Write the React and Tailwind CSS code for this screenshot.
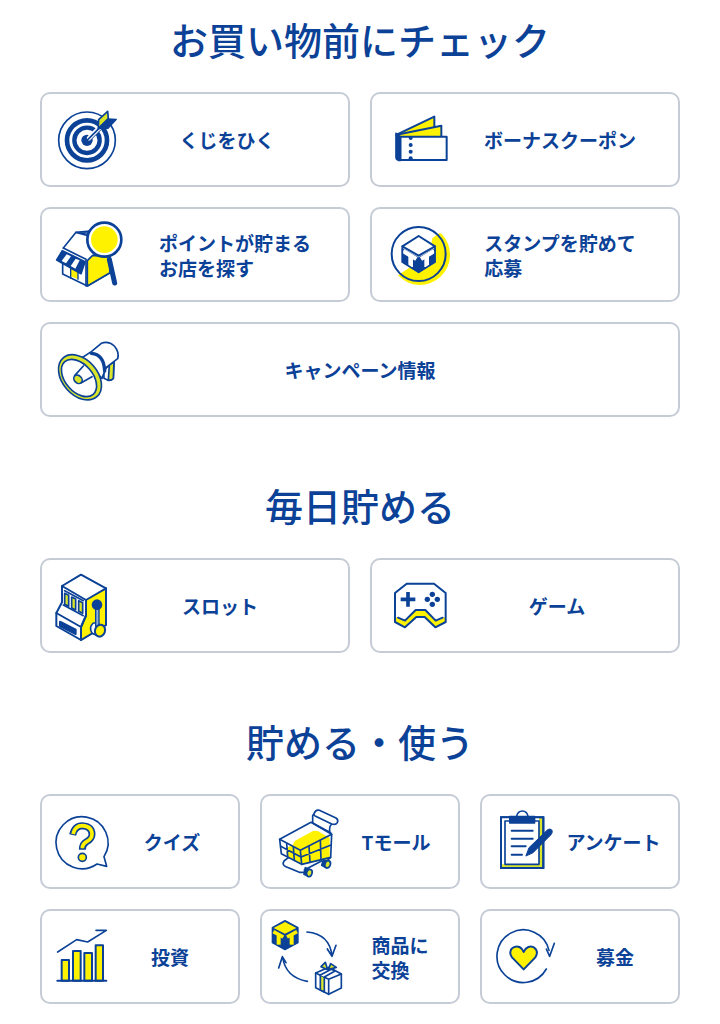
const BLUE = '#0b4297'
const YELLOW = '#fff200'
const LIME = '#d9e52b'

// アイコンは 1px = 3 単位で描く
function Icon({ className, viewBox, children }) {
  return (
    <svg
      className={`h-[85px] shrink-0 overflow-visible ${className}`}
      viewBox={viewBox}
      fill="none"
      stroke={BLUE}
      strokeWidth="6"
      strokeLinecap="round"
      strokeLinejoin="round"
      aria-hidden="true"
    >
      {children}
    </svg>
  )
}

function TargetIcon() {
  return (
    <Icon className="w-[76px]" viewBox="54 39 228 255">
      <circle cx="171" cy="169" r="85" strokeWidth="5" />
      <circle cx="171" cy="169" r="60" strokeWidth="14" />
      <circle cx="171" cy="169" r="38" strokeWidth="13" />
      <circle cx="171" cy="169" r="17" fill={BLUE} stroke="none" />
      <path d="M178 162 L206 134" stroke="#fff" strokeWidth="15" />
      <path d="M171 169 L210 130" strokeWidth="5" />
      <path d="M180 170 L212 138" strokeWidth="3" />
      <path d="M205 133 L206 107 L233 82 L235 104 Z" fill={LIME} strokeWidth="5" />
      <path d="M205 134 L234 105 L259 106 L234 133 Z" fill={BLUE} strokeWidth="4" />
    </Icon>
  )
}

function CouponIcon() {
  return (
    <Icon className="w-[82px]" viewBox="36 39 246 255">
      <path d="M92 152 L205 98 V160 H96 Z" fill={YELLOW} />
      <path d="M92 152 L226 125 V160 H96 Z" fill={YELLOW} />
      <path d="M102 158 H242 V228 H102 Z" fill="#fff" />
      <path d="M90 148 L104 159 V229 H98 Q90 227 90 220 Z" fill={BLUE} strokeWidth="5" />
      <g fill={BLUE} stroke="none">
        <path d="M128 158 H140 V162 A6 6 0 0 1 128 162 Z" />
        <circle cx="134" cy="183" r="6" />
        <circle cx="134" cy="203" r="6" />
        <path d="M128 228 V223 A6 6 0 0 1 140 223 V228 Z" />
      </g>
    </Icon>
  )
}

function StoreIcon() {
  return (
    <Icon className="w-[92px]" viewBox="54 36 276 255">
      <path d="M100 144 L138 97 L205 91 L238 160 L240 218 L172 258 L98 222 V180" fill="#fff" strokeWidth="5" />
      <path d="M172 182 L188 166 L238 170 L240 218 L172 258 Z" fill={YELLOW} strokeWidth="5" />
      <path d="M100 144 L168 178 V258 M138 97 L172 106 M146 99 H180" strokeWidth="5" />
      <path d="M123 205 L144 212 V238 L123 229 Z" fill={YELLOW} stroke="none" />
      <path d="M122 234 V204 L144 212 V238" strokeWidth="4" />
      <path d="M97 152 L165 185 L153 221 L80 180 Z" fill={BLUE} strokeWidth="5" />
      <path d="M110 163 L123 169 L108 190 L95 183 Z" fill="#fff" stroke="none" />
      <path d="M137 176 L149 181 L136 206 L122 198 Z" fill="#fff" stroke="none" />
      <path d="M238 178 L254 249" strokeWidth="15" />
      <circle cx="223" cy="119" r="51" fill="#fff" strokeWidth="8" />
      <circle cx="223" cy="119" r="40" fill={YELLOW} stroke="none" />
    </Icon>
  )
}

function StampIcon() {
  return (
    <Icon className="w-[82px]" viewBox="36 36 246 255">
      <path
        d="M215 103 Q222 97 228 103 A84 84 0 1 1 96 226 Q130 205 160 180 Q195 150 199 115 Z"
        fill={YELLOW}
        stroke="none"
      />
      <path d="M158 107 L209 139 V187 L158 219 L107 187 V139 Z" fill="#fff" stroke="none" />
      <circle cx="158" cy="162" r="81" />
      <path d="M107 143 L158 172 L209 143 V187 L158 219 L107 187 Z" fill={BLUE} stroke="none" />
      <g stroke="#fff" strokeLinecap="butt">
        <path d="M111 153 L151 177" strokeWidth="13" />
        <path d="M134 166 V201" strokeWidth="14" />
        <path d="M165 177 L205 153" strokeWidth="13" />
        <path d="M182 166 V201" strokeWidth="14" />
      </g>
      <path d="M158 108 L207 139 L158 167 L109 139 Z" fill="#fff" />
      <path d="M109 139 V186 L158 217 L207 186 V139" strokeWidth="5" />
    </Icon>
  )
}

function MegaphoneIcon() {
  return (
    <Icon className="w-[76px]" viewBox="54 36 228 255">
      <path d="M221 165 L252 138 L250 190 Q242 198 234 196 L222 190 Z" fill="#fff" strokeWidth="5" />
      <path d="M238 150 L252 140 L250 190 Q244 197 235 195 Z" fill={LIME} strokeWidth="5" />
      <path d="M155 129 L184 110 L214 85 Q235 76 253 93 Q269 112 263 131 L228 158 L216 190 Z" fill="#fff" strokeWidth="5" />
      <path d="M184 115 Q222 118 224 168" strokeWidth="10" />
      <ellipse cx="150" cy="187" rx="77" ry="53" transform="rotate(49 150 187)" fill={LIME} strokeWidth="5" />
      <ellipse cx="147" cy="189" rx="65" ry="41" transform="rotate(49 147 189)" fill="#fff" strokeWidth="5" />
      <path d="M134 182 L160 153 M154 203 L186 185" strokeWidth="5" />
      <ellipse cx="144" cy="193" rx="14" ry="11" transform="rotate(45 144 193)" fill={LIME} strokeWidth="5" />
    </Icon>
  )
}

function SlotIcon() {
  return (
    <Icon className="w-[62px]" viewBox="54 42 186 255">
      <path d="M153 77 L228 118 V228 L153 273 L79 231 V192 L96 160 V111 Z" fill="#fff" />
      <path d="M168 153 L228 118 V228 L153 273 V234 L168 200 Z" fill={YELLOW} />
      <path d="M96 111 L168 153 V200 L153 234 L79 192" />
      <path d="M104 125 L160 155 M100 168 L160 200" strokeWidth="5" />
      <path d="M104 133 L116 139 V172 L104 166 Z" fill={LIME} strokeWidth="5" />
      <path d="M125 144 L137 150 V183 L125 177 Z" fill={LIME} strokeWidth="5" />
      <path d="M146 155 L158 161 V193 L146 187 Z" fill={LIME} strokeWidth="5" />
      <path d="M90 218 L137 242 V255 L90 231 Z" fill={BLUE} />
      <path d="M197 222 H190 Q180 231 182 242 Q184 255 196 257 L208 262 L222 232 Z" fill="#fff" strokeWidth="5" />
      <path d="M197 170 H207 V232 H197 Z" fill="#8fb0d8" strokeWidth="4" />
      <circle cx="201" cy="167" r="13" fill={BLUE} />
      <ellipse cx="210" cy="245" rx="15" ry="18" transform="rotate(20 210 245)" fill={YELLOW} />
    </Icon>
  )
}

function GameIcon() {
  return (
    <Icon className="w-[76px]" viewBox="36 42 228 255">
      <path
        d="M87 203 L117 216 L149 183 H178 L209 216 L239 203 V219 L208 236 L176 204 H151 L117 236 L87 219 Z"
        fill={YELLOW}
        stroke="none"
      />
      <path d="M87 132 L122 104 H204 L239 132 V219 L208 235 L176 204 H151 L117 235 L87 219 Z" />
      <path d="M96 206 L117 215 L149 183 H178 L209 215 L230 206" />
      <path d="M104 151 H148 M126 129 V173" strokeWidth="11" strokeLinecap="butt" />
      <g fill={BLUE} stroke="none">
        <circle cx="199" cy="136" r="8" />
        <circle cx="199" cy="166" r="8" />
        <circle cx="184" cy="151" r="8" />
        <circle cx="214" cy="151" r="8" />
      </g>
    </Icon>
  )
}

function QuizIcon() {
  return (
    <Icon className="w-[64px]" viewBox="54 42 192 255">
      <path d="M201 237 A78 78 0 1 1 222 215 L230 244 Z" strokeWidth="5" />
      <path d="M128 150 Q134 122 157 122 Q186 124 186 148 Q186 162 170 170 Q157 177 157 194" strokeWidth="21" strokeLinecap="butt" />
      <path d="M129 147 Q135 122 157 122 Q186 124 186 148 Q186 162 170 170 Q157 177 157 190" stroke={YELLOW} strokeWidth="11" strokeLinecap="butt" />
      <circle cx="157" cy="217" r="12" fill={YELLOW} strokeWidth="5" />
    </Icon>
  )
}

function CartIcon() {
  return (
    <Icon className="w-[72px]" viewBox="714 42 216 255">
      <path d="M787 181 L795 167 L849 138 Q864 135 873 144 L899 158 V222 L815 238 L770 213 V188 Z" fill={YELLOW} stroke="none" />
      <g strokeWidth="5">
        <path d="M848 114 V92 L857 78 Q862 74 868 76 L918 99 Q926 104 922 113 Q917 121 905 117 L857 94 Q848 90 855 80" fill="#fff" />
        <path d="M848 114 L902 143 M905 118 Q896 124 900 143" />
        <path d="M749 163 L843 112 L905 148 L902 217 L815 238 L754 206 Z" />
        <path d="M749 163 L811 196 L905 148 M811 196 L815 238" />
        <path d="M752 184 L813 216 L903 180 M770 175 L773 215 M790 186 L793 226 M837 183 L840 231 M871 166 L873 224" />
        <path d="M775 218 L762 228 Q755 240 768 245 L808 262 L823 262 M823 255 L876 227 M902 217 L888 230" />
        <path d="M826 248 L844 256 L836 274 L822 268 Z M880 226 L896 228 L890 249 L875 241 Z" fill={BLUE} />
        <ellipse cx="838" cy="264" rx="8" ry="11" transform="rotate(20 838 264)" fill={LIME} />
        <ellipse cx="893" cy="238" rx="8" ry="11" transform="rotate(20 893 238)" fill={LIME} />
      </g>
    </Icon>
  )
}

function SurveyIcon() {
  return (
    <Icon className="w-[67px]" viewBox="366 42 201 255">
      <path d="M405 97 H532 V249 H405 Z" fill={LIME} />
      <path d="M405 97 H519 V238 H405 Z" fill="#fff" stroke="none" />
      <path d="M405 97 H532 V249 H405 Z" strokeLinejoin="miter" />
      <path d="M417 108 H519 V238 H417 Z" fill="#fff" strokeWidth="5" />
      <path d="M437 137 H500 M437 161 H500 M437 184 H479 M437 209 H468" />
      <path d="M452 94 Q455 78 469 78 Q483 78 486 94" strokeWidth="5" />
      <path d="M431 94 H506 V114 H431 Z" fill={BLUE} strokeWidth="4" />
      <path d="M480 212 L489 188 L545 134 Q553 129 558 136 Q561 142 555 149 L501 203 Z" fill={BLUE} strokeWidth="3" />
    </Icon>
  )
}

function InvestIcon() {
  return (
    <Icon className="w-[60px]" viewBox="54 42 180 255">
      <path d="M95 180 H117 V242 H95 Z" fill={YELLOW} />
      <path d="M129 153 H152 V242 H129 Z" fill={YELLOW} />
      <path d="M163 159 H186 V242 H163 Z" fill={YELLOW} />
      <path d="M197 136 H219 V242 H197 Z" fill={YELLOW} />
      <path d="M82 242 H229" />
      <path d="M83 156 L140 119 L173 126 L229 91 H198" strokeWidth="5" />
    </Icon>
  )
}

function ExchangeIcon() {
  return (
    <Icon className="w-[80px]" viewBox="714 42 240 255">
      <path d="M765 62 L804 83 V128 L765 149 L727 128 V83 Z" fill={BLUE} strokeWidth="4" />
      <path d="M765 66 L799 84 L765 101 L731 84 Z" fill={YELLOW} stroke="none" />
      <g stroke={YELLOW} strokeLinecap="butt">
        <path d="M730 95 L760 111" strokeWidth="11" />
        <path d="M746 103 V134" strokeWidth="12" />
        <path d="M771 111 L801 95" strokeWidth="11" />
        <path d="M785 103 V134" strokeWidth="12" />
      </g>
      <path d="M831 96 Q899 102 906 168 M892 147 L906 169 L918 136" strokeWidth="5" />
      <path d="M832 244 Q766 232 758 171 M746 204 L757 170 L768 188" strokeWidth="5" />
      <g strokeWidth="5">
        <path d="M857 219 L897 202 L934 222 V264 L896 283 L857 263 Z" fill="#fff" />
        <path d="M857 219 L896 238 L934 222 M896 238 V283" />
        <path d="M871 225 L883 231 V276 L871 270 Z" fill={LIME} />
        <path d="M871 225 L904 208 L915 213 L883 231" fill="#fff" />
        <path d="M893 209 L873 200 L886 187 Z M895 209 L902 191 L919 202 Z" fill={LIME} />
      </g>
    </Icon>
  )
}

function DonationIcon() {
  return (
    <Icon className="w-[70px]" viewBox="366 42 210 255">
      <path d="M549 151 A79 79 0 1 0 541 207" strokeWidth="5" />
      <path d="M541 147 L551 169 L565 130" strokeWidth="5" />
      <path
        d="M473 208 L438 172 Q428 159 437 146 Q447 136 460 141 Q470 146 473 156 Q477 145 487 141 Q500 136 509 147 Q517 159 508 172 Z"
        fill={YELLOW}
      />
    </Icon>
  )
}

const SECTIONS = [
  {
    title: 'お買い物前にチェック',
    grid: 'grid-cols-2',
    pad: 'pr-[18px]',
    items: [
      { lines: ['くじをひく'], Icon: TargetIcon },
      { lines: ['ボーナスクーポン'], Icon: CouponIcon },
      { lines: ['ポイントが貯まる', 'お店を探す'], Icon: StoreIcon },
      { lines: ['スタンプを貯めて', '応募'], Icon: StampIcon },
      { lines: ['キャンペーン情報'], Icon: MegaphoneIcon, wide: true },
    ],
  },
  {
    title: '毎日貯める',
    grid: 'grid-cols-2',
    pad: 'pr-[18px]',
    items: [
      { lines: ['スロット'], Icon: SlotIcon },
      { lines: ['ゲーム'], Icon: GameIcon },
    ],
  },
  {
    title: '貯める・使う',
    grid: 'grid-cols-3',
    pad: 'pr-1.5',
    items: [
      { lines: ['クイズ'], Icon: QuizIcon },
      { lines: ['Tモール'], Icon: CartIcon },
      { lines: ['アンケート'], Icon: SurveyIcon },
      { lines: ['投資'], Icon: InvestIcon },
      { lines: ['商品に', '交換'], Icon: ExchangeIcon },
      { lines: ['募金'], Icon: DonationIcon },
    ],
  },
]

function MenuCard({ item, pad }) {
  const { lines, Icon: ItemIcon, wide } = item
  return (
    <a
      href="#"
      className={`flex h-[95px] items-center rounded-[10px] border-2 border-[#c6ccd6] bg-white pl-1.5 ${
        wide ? 'col-span-full pr-[82px]' : pad
      }`}
    >
      <ItemIcon />
      <span className="flex flex-1 justify-center">
        <span className="text-[19px] leading-[25px] font-bold whitespace-nowrap">
          {lines.map((line) => (
            <span key={line} className="block">{line}</span>
          ))}
        </span>
      </span>
    </a>
  )
}

export default function App() {
  return (
    <main className="flex min-h-screen flex-col gap-[63px] bg-white px-10 pt-3.5 pb-5 font-['Noto_Sans_CJK_JP',sans-serif] text-[#0b4297]">
      {SECTIONS.map((section) => (
        <section key={section.title}>
          <h2 className="mb-7 text-center text-[38px] leading-[50px] font-medium">{section.title}</h2>
          <div className={`grid gap-5 ${section.grid}`}>
            {section.items.map((item) => (
              <MenuCard key={item.lines[0]} item={item} pad={section.pad} />
            ))}
          </div>
        </section>
      ))}
    </main>
  )
}
